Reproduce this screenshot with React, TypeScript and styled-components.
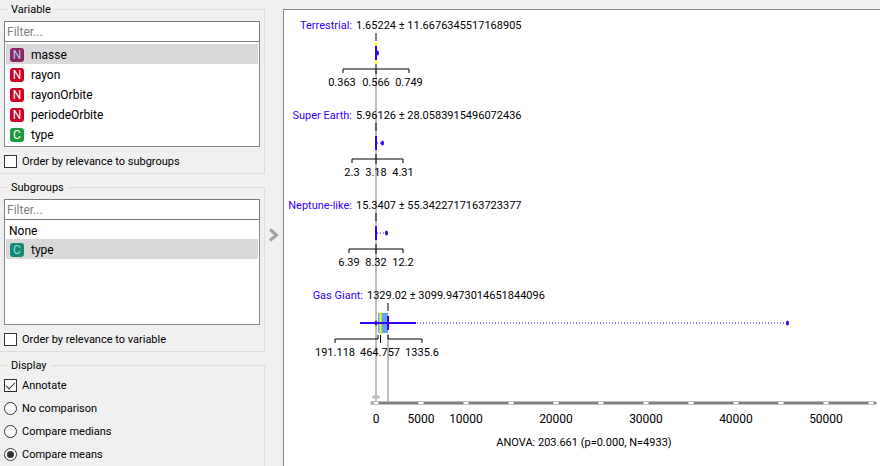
import React, { useState } from "react";
import styled, { createGlobalStyle } from "styled-components";

const GlobalStyle = createGlobalStyle`
  *, *::before, *::after { box-sizing: border-box; }
  body {
    margin: 0;
    background: #f0f0f0;
    color: #000;
    font: 11px/18px Roboto, "Noto Sans", sans-serif;
  }
`;

const Shell = styled.main`
  display: grid;
  grid-template-columns: 265px 18px minmax(0, 1fr);
  height: 100vh;
  overflow: hidden;
`;

const Controls = styled.form`
  display: flex;
  flex-direction: column;
  gap: 4px;
`;

const Group = styled.fieldset`
  margin: 0;
  padding: 0 4px;
  min-width: 0;
  border: 1px solid #dcdcdc;
  border-left: 0;
`;

const Legend = styled.legend`
  margin-left: 3px;
  padding: 0 4px;
  height: 18px;
  line-height: 20px;
`;

const FilterInput = styled.input`
  display: block;
  width: 100%;
  height: 21px;
  margin-top: 3px;
  padding: 0 2px;
  border: 1px solid #7a7a7a;
  border-radius: 0;
  background: #fff;
  font: inherit;
  font-size: 12px;
  outline: none;
  &::placeholder { color: #808080; opacity: 1; }
`;

const List = styled.ul`
  height: 105px;
  margin: 0 0 3px;
  padding: 2px 1px;
  border: 1px solid #828790;
  border-top: 0;
  background: #fff;
  list-style: none;
  font-size: 12px;
  line-height: 20px;
`;

const Item = styled.li<{ $selected: boolean; $plain: boolean }>`
  display: flex;
  align-items: center;
  gap: 7px;
  height: ${(p) => (p.$plain ? 17 : 20)}px;
  padding-top: ${(p) => (p.$plain ? 0 : 1)}px;
  padding-left: ${(p) => (p.$plain ? 3 : 4)}px;
  background: ${(p) => (p.$selected ? "#d9d9d9" : "transparent")};
  cursor: default;
`;

const tones = {
  N: { base: "#cf0023", active: "#8c2560" },
  C: { base: "#1b9a40", active: "#148a6e" },
};

const TypeBadge = styled.span<{ $kind: "N" | "C"; $selected: boolean }>`
  display: flex;
  align-items: center;
  justify-content: center;
  width: 14px;
  height: 14px;
  border-radius: 3px;
  background: ${(p) => tones[p.$kind][p.$selected ? "active" : "base"]};
  color: ${(p) => (p.$selected ? "#a5d3ee" : "#fff")};
  font-size: 12px;
  line-height: 14px;
`;

const Choice = styled.label`
  display: flex;
  align-items: center;
  gap: 5px;
  height: 23px;
`;

const Check = styled.input`
  appearance: none;
  width: 13px;
  height: 13px;
  margin: 0;
  border: 1px solid #333;
  background: #fff;
  display: grid;
  place-items: center;
  &:checked::before {
    content: "";
    width: 9px;
    height: 5px;
    margin-bottom: 3px;
    border: solid #333;
    border-width: 0 0 1px 1px;
    transform: rotate(-45deg);
  }
`;

const Radio = styled.input`
  appearance: none;
  width: 13px;
  height: 13px;
  margin: 0;
  border: 1px solid #333;
  border-radius: 50%;
  background: #fff;
  display: grid;
  place-items: center;
  &:checked::before {
    content: "";
    width: 7px;
    height: 7px;
    border-radius: 50%;
    background: #333;
  }
`;

const CollapseButton = styled.button`
  display: flex;
  align-items: center;
  justify-content: center;
  padding: 3px 0 0;
  border: 0;
  background: transparent;
`;

const Canvas = styled.section`
  margin-top: 9px;
  border: solid #828790;
  border-width: 1px 0 0 1px;
  background: #fff;
  overflow: hidden;
`;

const Plot = styled.svg`
  display: block;
  font-family: Roboto, "Noto Sans", sans-serif;
  font-size: 11px;
`;

type Variable = { name: string; kind?: "N" | "C" };

const variables: Variable[] = [
  { name: "masse", kind: "N" },
  { name: "rayon", kind: "N" },
  { name: "rayonOrbite", kind: "N" },
  { name: "periodeOrbite", kind: "N" },
  { name: "type", kind: "C" },
];
const subgroups: Variable[] = [{ name: "None" }, { name: "type", kind: "C" }];

function VariableList(props: { label: string; items: Variable[]; initial: string }) {
  const [selected, setSelected] = useState(props.initial);
  const [filter, setFilter] = useState("");
  return (
    <>
      <FilterInput
        aria-label={`Filter ${props.label}`}
        placeholder="Filter..."
        value={filter}
        onChange={(e) => setFilter(e.target.value)}
      />
      <List role="listbox" aria-label={props.label}>
        {props.items
          .filter((v) => v.name.toLowerCase().includes(filter.toLowerCase()))
          .map((v) => (
            <Item
              key={v.name}
              role="option"
              aria-selected={v.name === selected}
              $selected={v.name === selected}
              $plain={!v.kind}
              onClick={() => setSelected(v.name)}
            >
              {v.kind && (
                <TypeBadge $kind={v.kind} $selected={v.name === selected}>
                  {v.kind}
                </TypeBadge>
              )}
              {v.name}
            </Item>
          ))}
      </List>
    </>
  );
}

const BLUE = "#3300ff";
const GUIDE = "#bfbfbf";

type SmallGroup = {
  y: number;
  name: string;
  stats: string;
  bracket: [number, number];
  quartiles: [number, string][];
  far: number;
};

const smallGroups: SmallGroup[] = [
  {
    y: 53, name: "Terrestrial:", stats: "1.65224 ± 11.6676345517168905",
    bracket: [343, 409], quartiles: [[342, "0.363"], [376, "0.566"], [409, "0.749"]], far: 377,
  },
  {
    y: 143, name: "Super Earth:", stats: "5.96126 ± 28.0583915496072436",
    bracket: [352, 403], quartiles: [[352, "2.3"], [376, "3.18"], [403, "4.31"]], far: 382,
  },
  {
    y: 233, name: "Neptune-like:", stats: "15.3407 ± 55.3422717163723377",
    bracket: [349, 403], quartiles: [[349, "6.39"], [376, "8.32"], [403, "12.2"]], far: 386,
  },
];

const ticks = Array.from({ length: 12 }, (_, i) => i * 5000);
const tickLabels = [0, 5000, 10000, 20000, 30000, 40000, 50000];
const toX = (v: number) => 376 + v * 0.009;

function GroupBox({ y, name, stats, bracket, quartiles, far }: SmallGroup) {
  return (
    <g>
      <text x={352} y={y - 24} textAnchor="end" fill={BLUE}>{name}</text>
      <text x={356} y={y - 24}>{stats}</text>
      <path d={`M376 ${y - 20}V${y - 12}M376 ${y + 11}V${y + 21}`} stroke="#000" />
      {y < 100 && <path d={`M376 ${y - 11}V${y + 11}`} stroke="#ff0" strokeWidth="2" />}
      <path d={`M376 ${y - 7}V${y + 7}`} stroke={BLUE} strokeWidth="2" />
      <path d={`M377 ${y}H${far}`} stroke={BLUE} strokeDasharray="1 2" />
      <ellipse cx={far + 0.5} cy={y} rx="1.5" ry="2.5" fill={BLUE} />
      <path
        d={`M${bracket[0]} ${y + 20}V${y + 16}H${bracket[1]}V${y + 20}`}
        fill="none"
        stroke="#000"
      />
      {quartiles.map(([x, t]) => (
        <text key={t} x={x} y={y + 33} textAnchor="middle">{t}</text>
      ))}
    </g>
  );
}

function BoxPlot() {
  return (
    <Plot width="596" height="456" viewBox="284 10 596 456" role="img" aria-label="Box plot of masse by type">
      <path d="M376 70V402M388 334V402" stroke={GUIDE} strokeWidth="2" />
      {smallGroups.map((g) => <GroupBox key={g.name} {...g} />)}

      <g>
        <text x="363" y="299" textAnchor="end" fill={BLUE}>Gas Giant:</text>
        <text x="367" y="299">1329.02 ± 3099.9473014651844096</text>
        <rect x="378" y="313" width="10" height="20" fill="#66a3ff" />
        <path d="M388 303V311" stroke="#000" />
        <path d="M360 323H416M388 316V330" stroke={BLUE} strokeWidth="2" />
        <path d="M380.5 312V334" stroke="#ff0" strokeWidth="2" />
        <path d="M379 323H382" stroke={BLUE} strokeWidth="2" />
        <path d="M417 323H787" stroke={BLUE} strokeDasharray="1 2" />
        <ellipse cx="376" cy="323" rx="1.5" ry="2.5" fill={BLUE} />
        <ellipse cx="787.5" cy="323" rx="1.5" ry="2.5" fill={BLUE} />
        <path
          d="M335 343V339H378V335M380.5 335V343M388 335V339H422V343"
          fill="none"
          stroke="#000"
        />
        <text x="335" y="356" textAnchor="middle">191.118</text>
        <text x="380" y="356" textAnchor="middle">464.757</text>
        <text x="422" y="356" textAnchor="middle">1335.6</text>
      </g>

      <ellipse cx="376" cy="397" rx="4" ry="2" fill={GUIDE} />
      <path d="M372 403H875" stroke={GUIDE} strokeWidth="4" strokeLinecap="round" />
      <path d="M372 403H876" stroke="#808080" strokeWidth="2" />
      {ticks.map((t) => (
        <path key={t} d={`M${toX(t) - 2.5} 403h5`} stroke="#fff" strokeWidth="2" />
      ))}
      {tickLabels.map((t) => (
        <text key={t} x={toX(t)} y="423" textAnchor="middle" fontSize="12">{t}</text>
      ))}
      <text x="584" y="446" textAnchor="middle">ANOVA: 203.661 (p=0.000, N=4933)</text>
    </Plot>
  );
}

export default function App() {
  const [compare, setCompare] = useState("Compare means");
  return (
    <Shell>
      <GlobalStyle />
      <Controls>
        <Group>
          <Legend>Variable</Legend>
          <VariableList label="Variable" items={variables} initial="masse" />
          <Choice><Check type="checkbox" />Order by relevance to subgroups</Choice>
        </Group>
        <Group>
          <Legend>Subgroups</Legend>
          <VariableList label="Subgroups" items={subgroups} initial="type" />
          <Choice><Check type="checkbox" />Order by relevance to variable</Choice>
        </Group>
        <Group>
          <Legend>Display</Legend>
          <Choice><Check type="checkbox" defaultChecked />Annotate</Choice>
          {["No comparison", "Compare medians", "Compare means"].map((name) => (
            <Choice key={name}>
              <Radio
                type="radio"
                name="compare"
                checked={compare === name}
                onChange={() => setCompare(name)}
              />
              {name}
            </Choice>
          ))}
        </Group>
      </Controls>
      <CollapseButton type="button" aria-label="Collapse controls">
        <svg width="10" height="14" viewBox="0 0 10 14">
          <path d="M1 1.5L7.500 7L1 12.500" fill="none" stroke="#a0a0a0" strokeWidth="3" />
        </svg>
      </CollapseButton>
      <Canvas>
        <BoxPlot />
      </Canvas>
    </Shell>
  );
}
